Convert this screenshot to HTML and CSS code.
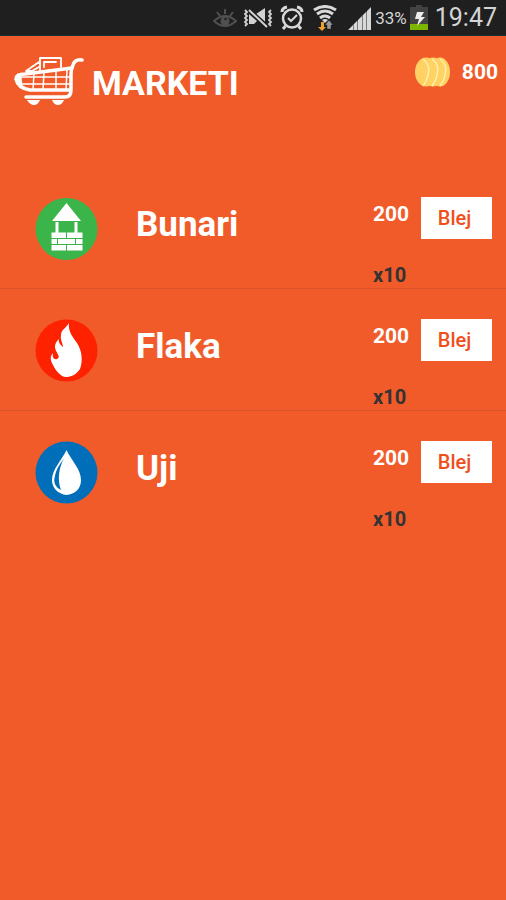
FILE: index.html
```html
<!DOCTYPE html>
<html lang="sq">
<head>
<meta charset="utf-8">
<meta name="viewport" content="width=device-width, initial-scale=1">
<title>Marketi</title>
<link rel="stylesheet" href="styles.css">
</head>
<body>
<div class="status">
  <svg class="eye" width="24" height="24" viewBox="0 0 24 24" fill="none" stroke="#505050" stroke-width="2">
    <path d="M1 15Q12 5 23 15Q12 25 1 15Z"/><path d="M12 3v5M4 6l3 4M20 6l-3 4"/><circle cx="12" cy="15" r="4.500" fill="#505050" stroke="none"/><circle cx="12.500" cy="13" r="1.300" fill="#1f1f1f" stroke="none"/>
  </svg>
  <svg class="mute" width="30" height="24" viewBox="0 0 30 24" fill="none" stroke="#d2d2d2">
    <path d="M2 4l2 2-2 2 2 2-2 2 2 2-2 2 2 2-2 2M28 4l-2 2 2 2-2 2 2 2-2 2 2 2-2 2 2 2" stroke-width="1.800"/>
    <path d="M6 7V18h5l3-3L6 8ZM13 8l9-6v14Z" fill="#d2d2d2" stroke="none"/><path d="M7 3L24 19" stroke="#1f1f1f" stroke-width="2"/><path d="M6 4L24 21" stroke-width="2"/>
  </svg>
  <svg class="alarm" width="24" height="26" viewBox="0 0 24 26" fill="none" stroke="#d8d8d8" stroke-width="2.500">
    <circle cx="12" cy="13.500" r="9"/><path d="M8 13l3 3 6-6" stroke-width="2"/><path d="M2 7q0-4 5-5M22 7q0-4-5-5M5.500 21L3 24M18.500 21l2.500 3" stroke-width="3"/>
  </svg>
  <svg class="wifi" width="26" height="26" viewBox="0 0 26 26" fill="none">
    <path d="M2 5Q13-2 24 5M5 9Q13 3 21 9M8 13Q13 9 18 13" stroke="#d8d8d8" stroke-width="3"/><path d="M10 15q3-2 6 0l-3 3Z" fill="#d8d8d8"/>
    <path d="M9 17h3v5h2l-4 4-4-4h3Z" fill="#eea02e"/><path d="M15 24v-4h-2l4-5 4 5h-2v4Z" fill="#999" stroke="#1f1f1f" stroke-width=".5"/>
  </svg>
  <svg class="signal" width="24" height="24" viewBox="0 0 24 24" fill="#d8d8d8"><path d="M1 24l5-5v5ZM6.500 18.500l4-4v9.500h-4ZM11 14l4-4v14h-4ZM15.500 9.500l4-4v18.500h-4ZM20 5l4-4v23h-4Z"/></svg>
  <span class="percent">33%</span>
  <svg class="battery" width="18" height="25" viewBox="0 0 18 25"><path d="M6 0h6v2h6v23H0V2h6Z" fill="#424242"/><path d="M0 19h18v6H0Z" fill="#7eb500"/><path d="M7 7h7l-3 5h4L7 21l2-7H5Z" fill="#eee"/></svg>
  <time class="clock">19:47</time>
</div>
<header class="header">
  <svg class="cart" width="72" height="50" viewBox="0 0 72 50" fill="none" stroke="#fff" stroke-linecap="round" stroke-linejoin="round">
    <path d="M68 3Q61 2 59 8Q57 12 57 17V33Q57 40 51 40H12" stroke-width="3.500"/>
    <path d="M58 11L11 17Q2 17 2 22Q4 31 16 33H56" stroke-width="3.500"/>
    <path d="M4 17Q1 24 8 30L7 20Z" fill="#fff" stroke-width="1"/>
    <path d="M5 20H56M8 27H56M20 16L19 33M30 15L29 33M42 13V33M53 13L52 33" stroke-width="1.500"/>
    <path d="M26 13V1h21v9M30 10V5h12M12 14L25 5M18 14L25 10M12 14H18" stroke-width="1.800"/>
    <path d="M13 43h13q-2 5-6 5t-7-5ZM38 43h12q-2 5-6 5t-6-5Z" fill="#fff" stroke="none"/>
  </svg>
  <h1 class="title">MARKETI</h1>
  <div class="balance">
    <svg width="36" height="30" viewBox="0 0 36 30"><g fill="#ffd263"><ellipse cx="25" cy="15" rx="10" ry="14.500"/><ellipse cx="18" cy="15" rx="11" ry="14.500"/><ellipse cx="11" cy="15" rx="11" ry="14.500"/></g><path d="M8 2q8 6 5 16-1 6-5 11M17 2q8 6 5 16-1 6-5 11M25 2q8 6 5 16-1 6-5 11" fill="none" stroke="#fff0ae" stroke-width="1.500"/></svg>
    <span>800</span>
  </div>
</header>
<main>
  <ul class="items">
    <li class="item">
      <svg class="icon" viewBox="0 0 64 64"><circle cx="31.500" cy="32" r="31" fill="#3bb54a"/><path d="M31.500 6L46 24H17ZM20.500 25h3v10.500h-3ZM39.500 25h3v10.500h-3ZM16.500 35.500h14.500v5.500H16.500ZM32 35.500h15.500v5.500H32ZM16.500 42h5.500v5h-5.500ZM23 42h17v5H23ZM41 42h6.500v5h-6.500ZM16.500 48h14.500v5.500H16.500ZM32 48h15.500v5.500H32Z" fill="#fff"/></svg>
      <h2 class="name">Bunari</h2>
      <div class="amounts"><span class="price">200</span><span class="count">x10</span></div>
      <button class="buy" type="button" aria-label="Blej Bunari">Blej</button>
    </li>
    <li class="item">
      <svg class="icon" viewBox="0 0 64 64"><circle cx="31.500" cy="31.500" r="31" fill="#ff2200"/><path d="M34 4C33 12 37 17 42 24C47 32 48 41 45 50C41 56 36 58 31 58C26 58 21 52 18 46C15 41 15 37 18 34C17 38 19 41 22 40C27 38 20 33 20 28C20 24 22 22 24 20C23 24 26 26 28 28C28 24 25 21 26 16C26 11 31 9 34 4Z" fill="#fff"/></svg>
      <h2 class="name">Flaka</h2>
      <div class="amounts"><span class="price">200</span><span class="count">x10</span></div>
      <button class="buy" type="button" aria-label="Blej Flaka">Blej</button>
    </li>
    <li class="item">
      <svg class="icon" viewBox="0 0 64 64"><circle cx="31.500" cy="31.500" r="31" fill="#006eb8"/><path d="M31.500 9C36 19 46 28 46 39C46 48 40 53 31.500 54C23 53 17 47 17 39C17 28 27 19 31.500 9Z" fill="#fff"/><path d="M29 17C24 27 22 38 26 49C20 46 18 41 20 35C21 28 26 22 29 17Z" fill="#006eb8"/></svg>
      <h2 class="name">Uji</h2>
      <div class="amounts"><span class="price">200</span><span class="count">x10</span></div>
      <button class="buy" type="button" aria-label="Blej Uji">Blej</button>
    </li>
  </ul>
</main>
</body>
</html>
```
FILE: styles.css
```css
* { box-sizing: border-box; }

body {
  margin: 0;
  min-height: 100vh;
  background: #f15b2a;
  color: #fff;
  font-family: Roboto, "Liberation Sans", sans-serif;
}

svg { display: block; flex: none; }

.status {
  display: flex;
  align-items: center;
  justify-content: flex-end;
  height: 36px;
  padding-right: 9px;
  background: #1f1f1f;
  border-bottom: 1px solid #163037;
  color: #d4d4d4;
}

.mute { margin-left: 6px; }
.alarm { margin-left: 7px; }
.wifi { margin-left: 8px; }
.signal { margin-left: 9px; }
.percent { margin-left: 4px; font-size: 17px; }
.battery { margin-left: 3px; }
.clock { margin-left: 7px; font-size: 25px; }

.header {
  display: flex;
  align-items: flex-start;
  padding: 21px 8px 0 14px;
}

.title {
  margin: 6px 0 0 6px;
  font-size: 34px;
  line-height: 40px;
  font-weight: 700;
}

.balance {
  display: flex;
  align-items: center;
  gap: 11px;
  margin-left: auto;
  font-size: 21px;
  line-height: 30px;
  font-weight: 700;
}

.items {
  margin: 60px 0 0;
  padding: 0;
  list-style: none;
}

.item {
  display: grid;
  grid-template-columns: 64px 1fr 48px 71px;
  align-items: start;
  height: 122px;
  padding: 30px 14px 0 35px;
  border-bottom: 1px solid #d8532a;
}

.item:last-child { border-bottom: 0; }

.icon { width: 64px; height: 64px; }

.name {
  margin: 6px 0 0 37px;
  font-size: 35px;
  line-height: 44px;
  font-weight: 700;
}

.amounts {
  display: flex;
  flex-direction: column;
  gap: 36px;
  padding-top: 5px;
  font-weight: 700;
  line-height: 25px;
}

.price { font-size: 21px; }
.count { font-size: 20px; color: #333; }

.buy {
  height: 42px;
  padding: 0 4px 0 0;
  border: 0;
  border-radius: 0;
  background: #fff;
  color: #f04e1a;
  font: 500 20px Roboto, "Liberation Sans", sans-serif;
}
```
